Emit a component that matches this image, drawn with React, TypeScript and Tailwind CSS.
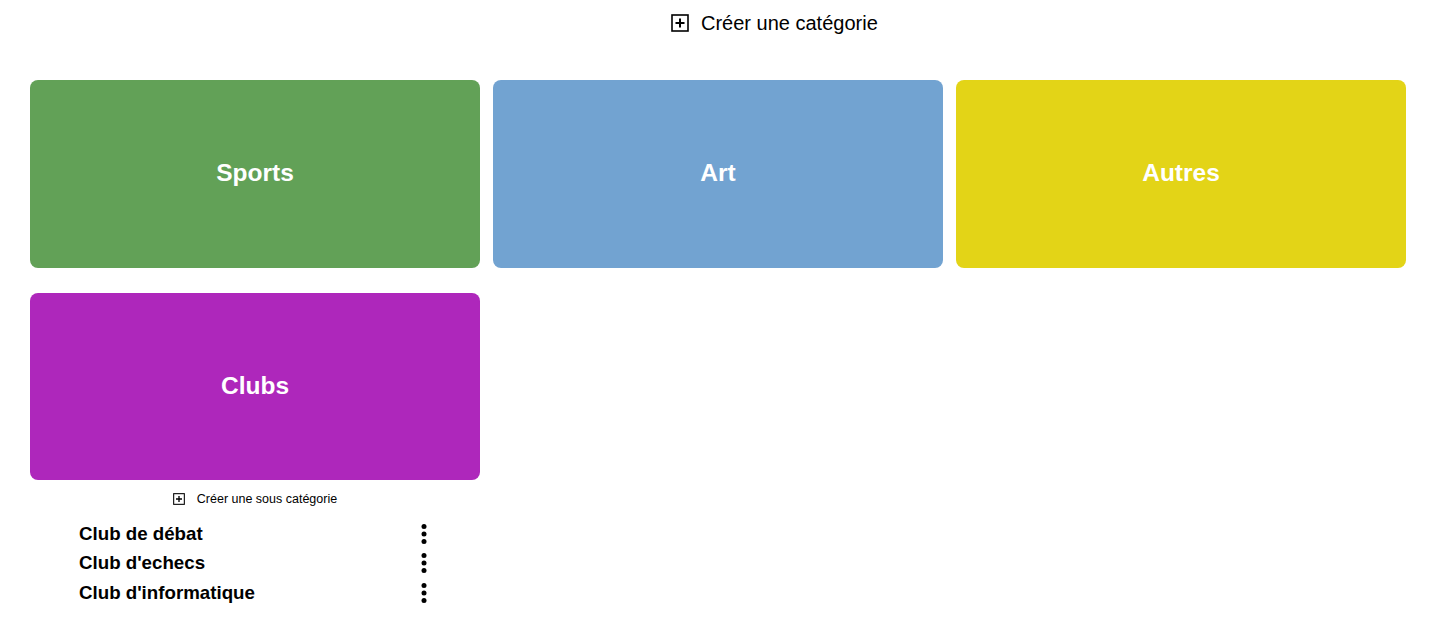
const categories = [
  { name: 'Sports', color: 'bg-[#62a157]' },
  { name: 'Art', color: 'bg-[#72a3d1]' },
  { name: 'Autres', color: 'bg-[#e3d417]' },
  { name: 'Clubs', color: 'bg-[#ae27bb]' },
]

const clubs = ['Club de débat', "Club d'echecs", "Club d'informatique"]

function PlusBox({ className }: { className?: string }) {
  return (
    <svg viewBox="0 0 18 18" className={className} fill="none" stroke="currentColor">
      <rect x="1" y="1" width="16" height="16" strokeWidth="1.6" />
      <path d="M9 4.5v9M4.5 9h9" strokeWidth="2" />
    </svg>
  )
}

function MoreVert() {
  return (
    <svg viewBox="0 0 24 24" className="h-[30px] w-[30px]" fill="currentColor">
      <circle cx="12" cy="6" r="2" />
      <circle cx="12" cy="12" r="2" />
      <circle cx="12" cy="18" r="2" />
    </svg>
  )
}

function CategoryCard({ name, color }: { name: string; color: string }) {
  return (
    <div className={`flex h-[187.5px] items-center justify-center rounded-lg ${color}`}>
      <span className="text-[24.5px] font-bold text-white">{name}</span>
    </div>
  )
}

export default function App() {
  return (
    <div className="min-h-screen bg-white font-['Liberation_Sans',Arial,sans-serif] text-black">
      <div className="flex pt-[11px] pl-[671px]">
        <button type="button" className="flex items-center gap-[12px] text-[20px] leading-[24px]">
          <PlusBox className="h-[18px] w-[18px]" />
          Créer une catégorie
        </button>
      </div>

      <div className="mt-[45px] grid w-[1406px] grid-cols-3 gap-x-[13px] gap-y-[25px] pl-[30px]">
        {categories.map((c) => (
          <div key={c.name}>
            <CategoryCard name={c.name} color={c.color} />
            {c.name === 'Clubs' && (
              <div>
                <div className="flex justify-center pt-[12px]">
                  <button type="button" className="flex items-center gap-[12px] text-[12.5px] leading-[14px]">
                    <PlusBox className="h-[12px] w-[12px]" />
                    Créer une sous catégorie
                  </button>
                </div>
                <ul className="mt-[13px] pl-[49px] pr-[41px]">
                  {clubs.map((club) => (
                    <li key={club} className="flex h-[29.5px] items-center justify-between">
                      <span className="text-[18.72px] font-bold">{club}</span>
                      <MoreVert />
                    </li>
                  ))}
                </ul>
              </div>
            )}
          </div>
        ))}
      </div>
    </div>
  )
}
